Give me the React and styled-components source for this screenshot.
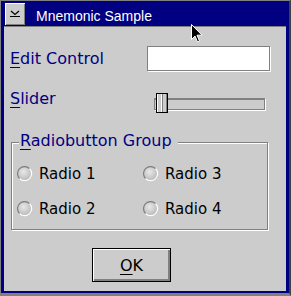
import React from "react";
import styled, { createGlobalStyle } from "styled-components";

const Global = createGlobalStyle`
  html, body { margin: 0; padding: 0; background: #cccccc; }
  body { font-family: "DejaVu Sans", sans-serif; }
  * { box-sizing: border-box; }
`;

const Frame = styled.div`
  position: relative;
  width: 291px;
  height: 296px;
  background: #000080;
  border-top: 1px solid #808080;
  border-left: 1px solid #808080;
  border-right: 2px solid #404040;
  border-bottom: 3px solid #808080;
  padding: 0 3px 2px 3px;
  display: flex;
  flex-direction: column;
  overflow: hidden;
`;

const TitleBar = styled.div`
  height: 25px;
  display: flex;
  align-items: flex-start;
  padding: 2px 0 0 1px;
  gap: 11px;
`;

const SysButton = styled.div`
  width: 20px;
  height: 22px;
  background: #cccccc;
  box-shadow: inset 1px 1px 0 #ffffff, inset -1px -1px 0 #808080;
  display: flex;
  align-items: center;
  justify-content: center;
`;

const Title = styled.div`
  margin-top: 5px;
  font-family: "Liberation Sans", Arial, sans-serif;
  font-size: 14px;
  line-height: 16px;
  color: #ffffff;
  white-space: nowrap;
`;

const Client = styled.div`
  flex: 1;
  background: #cccccc;
  border-top: 1px solid #808080;
  padding: 19px 16px 0 6px;
  display: flex;
  flex-direction: column;
`;

const FormGrid = styled.div`
  display: grid;
  grid-template-columns: 137px auto;
  row-gap: 18px;
  align-items: center;
`;

const Label = styled.label`
  font-size: 16px;
  line-height: 19px;
  color: #000080;
  align-self: ${(p) => (p.$top ? "start" : "center")};
  white-space: nowrap;
`;

const Mn = styled.span`
  text-decoration: underline;
  text-underline-offset: 3px;
  text-decoration-thickness: 1px;
`;

const EditBox = styled.div`
  width: 123px;
  height: 25px;
  background: #ffffff;
  border: 1px solid #808080;
  box-shadow: 1px 1px 0 #ffffff;
`;

const SliderWrap = styled.div`
  position: relative;
  width: 111px;
  height: 20px;
  margin: 4px 0 0 7px;
  align-self: start;
`;

const Track = styled.div`
  margin-top: 5px;
  height: 12px;
  border: 1px solid #808080;
  border-top-width: 2px;
  box-shadow: 1px 1px 0 #ffffff;
  background: #cccccc;
`;

const Thumb = styled.div`
  position: absolute;
  left: 2px;
  top: 0;
  width: 12px;
  height: 20px;
  border: 1px solid #000000;
  background: linear-gradient(
    to right,
    #ffffff 0 1px,
    #cccccc 1px 4px,
    #ffffff 4px 5px,
    #808080 5px 6px,
    #cccccc 6px 9px,
    #808080 9px 10px
  );
`;

const Group = styled.fieldset`
  margin: 18px 0 0 1px;
  width: 257px;
  padding: 11px 0 11px 5px;
  border: 1px solid #808080;
  box-shadow: inset 1px 1px 0 #ffffff, 1px 1px 0 #ffffff;
  min-width: 0;
`;

const Legend = styled.legend`
  margin-left: 2px;
  padding: 0 6px 4px 1px;
  font-size: 16px;
  line-height: 19px;
  color: #000080;
  background: #cccccc;
  white-space: nowrap;
`;

const RadioGrid = styled.div`
  display: grid;
  grid-template-columns: 126px auto;
  row-gap: 17px;
`;

const RadioItem = styled.label`
  display: flex;
  align-items: flex-start;
  gap: 6px;
  height: 18px;
  font-size: 15px;
  line-height: 18px;
  color: #000000;
  white-space: nowrap;
`;

const RadioDot = styled.svg`
  flex: none;
  margin-top: 1px;
`;

const OkButton = styled.button`
  margin: 18px 0 0 82px;
  width: 79px;
  height: 34px;
  padding: 0;
  border: 1px solid #000000;
  background: #cccccc;
  box-shadow: inset 1px 1px 0 #ffffff, inset -2px -2px 0 #808080;
  font-family: "DejaVu Sans", sans-serif;
  font-size: 16px;
  line-height: 19px;
  color: #000000;
`;

const Cursor = styled.svg`
  position: absolute;
  left: 190px;
  top: 23px;
`;

function Radio({ children, m }) {
  return (
    <RadioItem>
      <RadioDot width="16" height="16" viewBox="0 0 16 16">
        <defs>
          <radialGradient id="rg" cx="0.4" cy="0.35" r="0.7">
            <stop offset="0" stopColor="#e8e8e8" />
            <stop offset="1" stopColor="#b4b4b4" />
          </radialGradient>
        </defs>
        <circle cx="8" cy="8" r="7" fill="url(#rg)" />
        <path d="M2.6 12.6 A7 7 0 0 1 12.6 2.6" fill="none" stroke="#808080" strokeWidth="1.2" />
        <path d="M12.6 2.6 A7 7 0 0 1 2.6 12.6" fill="none" stroke="#ffffff" strokeWidth="1.2" />
      </RadioDot>
      <span>{children}</span>
    </RadioItem>
  );
}

export default function App() {
  return (
    <>
      <Global />
      <Frame>
        <TitleBar>
          <SysButton>
            <svg width="12" height="10" viewBox="0 0 12 10">
              <path d="M2 2 L6 5.5 L10 2" fill="none" stroke="#000" strokeWidth="1.2" />
              <rect x="1" y="7" width="10" height="1" fill="#000" />
            </svg>
          </SysButton>
          <Title>Mnemonic Sample</Title>
        </TitleBar>
        <Client>
          <FormGrid>
            <Label><Mn>E</Mn>dit Control</Label>
            <EditBox />
            <Label $top><Mn>S</Mn>lider</Label>
            <SliderWrap>
              <Track />
              <Thumb />
            </SliderWrap>
          </FormGrid>
          <Group>
            <Legend><Mn>R</Mn>adiobutton Group</Legend>
            <RadioGrid>
              <Radio>Radio 1</Radio>
              <Radio>Radio 3</Radio>
              <Radio>Radio 2</Radio>
              <Radio>Radio 4</Radio>
            </RadioGrid>
          </Group>
          <OkButton><Mn>O</Mn>K</OkButton>
        </Client>
        <Cursor width="12" height="19" viewBox="0 0 12 19">
          <path d="M0.5 0.5 L0.5 15.5 L4 12 L6.5 18 L8.5 17 L6 11.2 L11 11.2 Z" fill="#000" stroke="#fff" strokeWidth="1" />
        </Cursor>
      </Frame>
    </>
  );
}
